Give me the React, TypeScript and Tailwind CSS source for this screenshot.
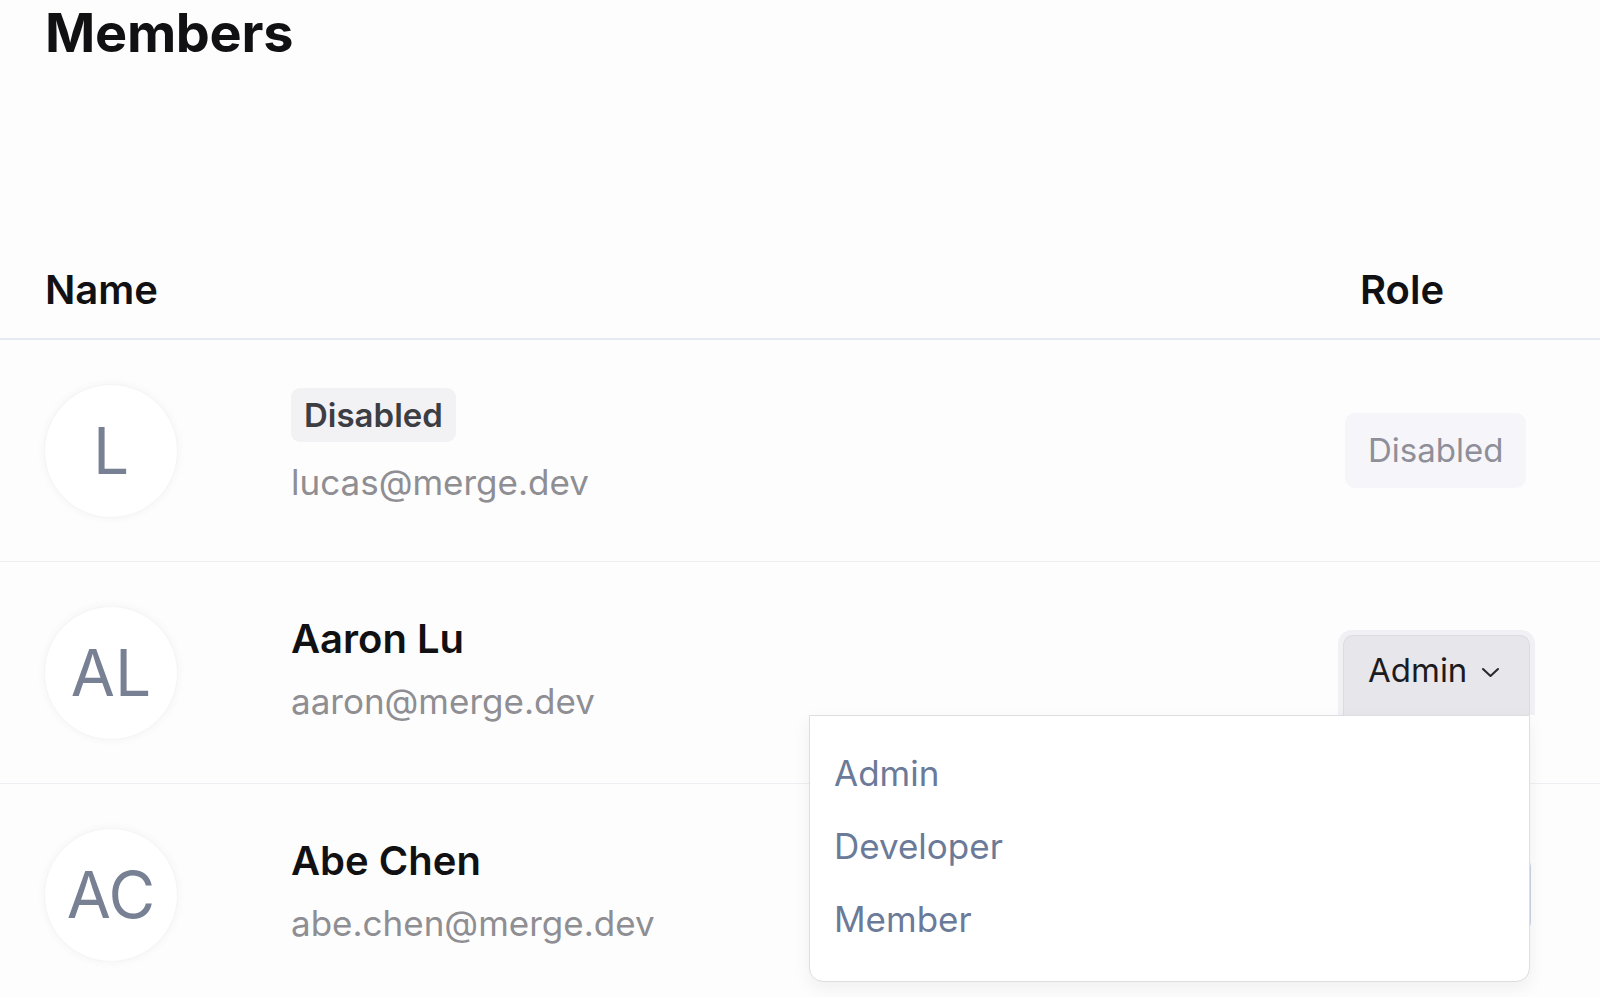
import React from "react";

function Avatar({ initials }: { initials: string }) {
  return (
    <div className="ml-[44px] flex h-[134px] w-[134px] shrink-0 items-center justify-center rounded-full border border-[#f5f4f7] bg-white shadow-[0_0_10px_rgba(0,0,0,0.045)]">
      <span className="text-[64px] font-normal leading-none text-[#788093]">{initials}</span>
    </div>
  );
}

function Chevron() {
  return (
    <svg width="19" height="11" viewBox="0 0 19 11" fill="none" className="ml-[14px] mt-[4px]">
      <path d="M2 2 L9.5 9 L17 2" stroke="#2a2a2e" strokeWidth="2.1" strokeLinecap="round" strokeLinejoin="round" />
    </svg>
  );
}

export default function App() {
  return (
    <div className="relative h-[997px] w-full overflow-hidden bg-[#fdfdfe] font-['Inter','Liberation_Sans',sans-serif] text-[#111113]">
      <h1 className="pl-[45px] pt-[6px] text-[54px] font-bold leading-none tracking-[-0.3px]">Members</h1>

      <div className="mt-[210px] flex h-[70px] items-start border-b-2 border-[#e4e9f2]">
        <div className="pl-[45px] text-[40px] font-semibold leading-none">Name</div>
        <div className="ml-auto w-[255px] pl-[15px] text-[40px] font-semibold leading-none">Role</div>
      </div>

      {/* Row 1 */}
      <div className="flex h-[222px] items-center border-b border-[#efeef2]">
        <Avatar initials="L" />
        <div className="ml-[113px] flex flex-col items-start self-start pt-[48px]">
          <span className="rounded-[9px] bg-[#f2f2f5] px-[13px] py-[9px] text-[33px] font-semibold leading-[36px] text-[#3d3d44]">
            Disabled
          </span>
          <span className="mt-[23px] text-[35px] leading-none text-[#8e8e93]">lucas@merge.dev</span>
        </div>
        <div className="ml-auto w-[255px]">
          <div className="flex h-[75px] w-[181px] items-center rounded-[10px] bg-[#f6f6fa] pl-[23px] text-[33px] leading-none text-[#8f8f99]">
            Disabled
          </div>
        </div>
      </div>

      {/* Row 2 */}
      <div className="flex h-[222px] items-center border-b border-[#efeef2]">
        <Avatar initials="AL" />
        <div className="ml-[113px] flex flex-col items-start self-start pt-[57px]">
          <span className="text-[40px] font-semibold leading-none">Aaron Lu</span>
          <span className="mt-[25px] text-[35px] leading-none text-[#8e8e93]">aaron@merge.dev</span>
        </div>
        <div className="ml-auto w-[262px]">
          <div className="relative w-[197px] rounded-t-[14px] bg-[#f1f0f4] px-[5px] pt-[5px]">
            <div className="flex h-[80px] w-[187px] items-center rounded-t-[10px] border border-b-0 border-[#dcdbe0] bg-[#e7e6ea] pb-[10px] pl-[24px] text-[33px] leading-none text-[#1c1c20]">
              Admin
              <Chevron />
            </div>
            <div className="absolute right-[5px] top-[85px] z-20 flex h-[267px] w-[721px] flex-col rounded-b-[14px] border border-[#deddE2] bg-white pl-[24px] pt-[21px] shadow-[0_6px_18px_rgba(0,0,0,0.06)]">
              <div className="flex h-[73px] items-center text-[35px] leading-none text-[#6b7a99]">Admin</div>
              <div className="flex h-[73px] items-center text-[35px] leading-none text-[#6b7a99]">Developer</div>
              <div className="flex h-[73px] items-center text-[35px] leading-none text-[#6b7a99]">Member</div>
            </div>
          </div>
        </div>
      </div>

      {/* Row 3 */}
      <div className="flex h-[222px] items-center border-b border-[#efeef2]">
        <Avatar initials="AC" />
        <div className="ml-[113px] flex flex-col items-start self-start pt-[57px]">
          <span className="text-[40px] font-semibold leading-none">Abe Chen</span>
          <span className="mt-[25px] text-[35px] leading-none text-[#8e8e93]">abe.chen@merge.dev</span>
        </div>
        <div className="ml-auto w-[262px] pl-[5px]">
          <div className="flex h-[75px] w-[188px] items-center rounded-[10px] border border-[#c9d3e2] bg-[#f6f6fa] pl-[24px] text-[33px] leading-none text-[#1c1c20]">
            Member
          </div>
        </div>
      </div>
    </div>
  );
}
